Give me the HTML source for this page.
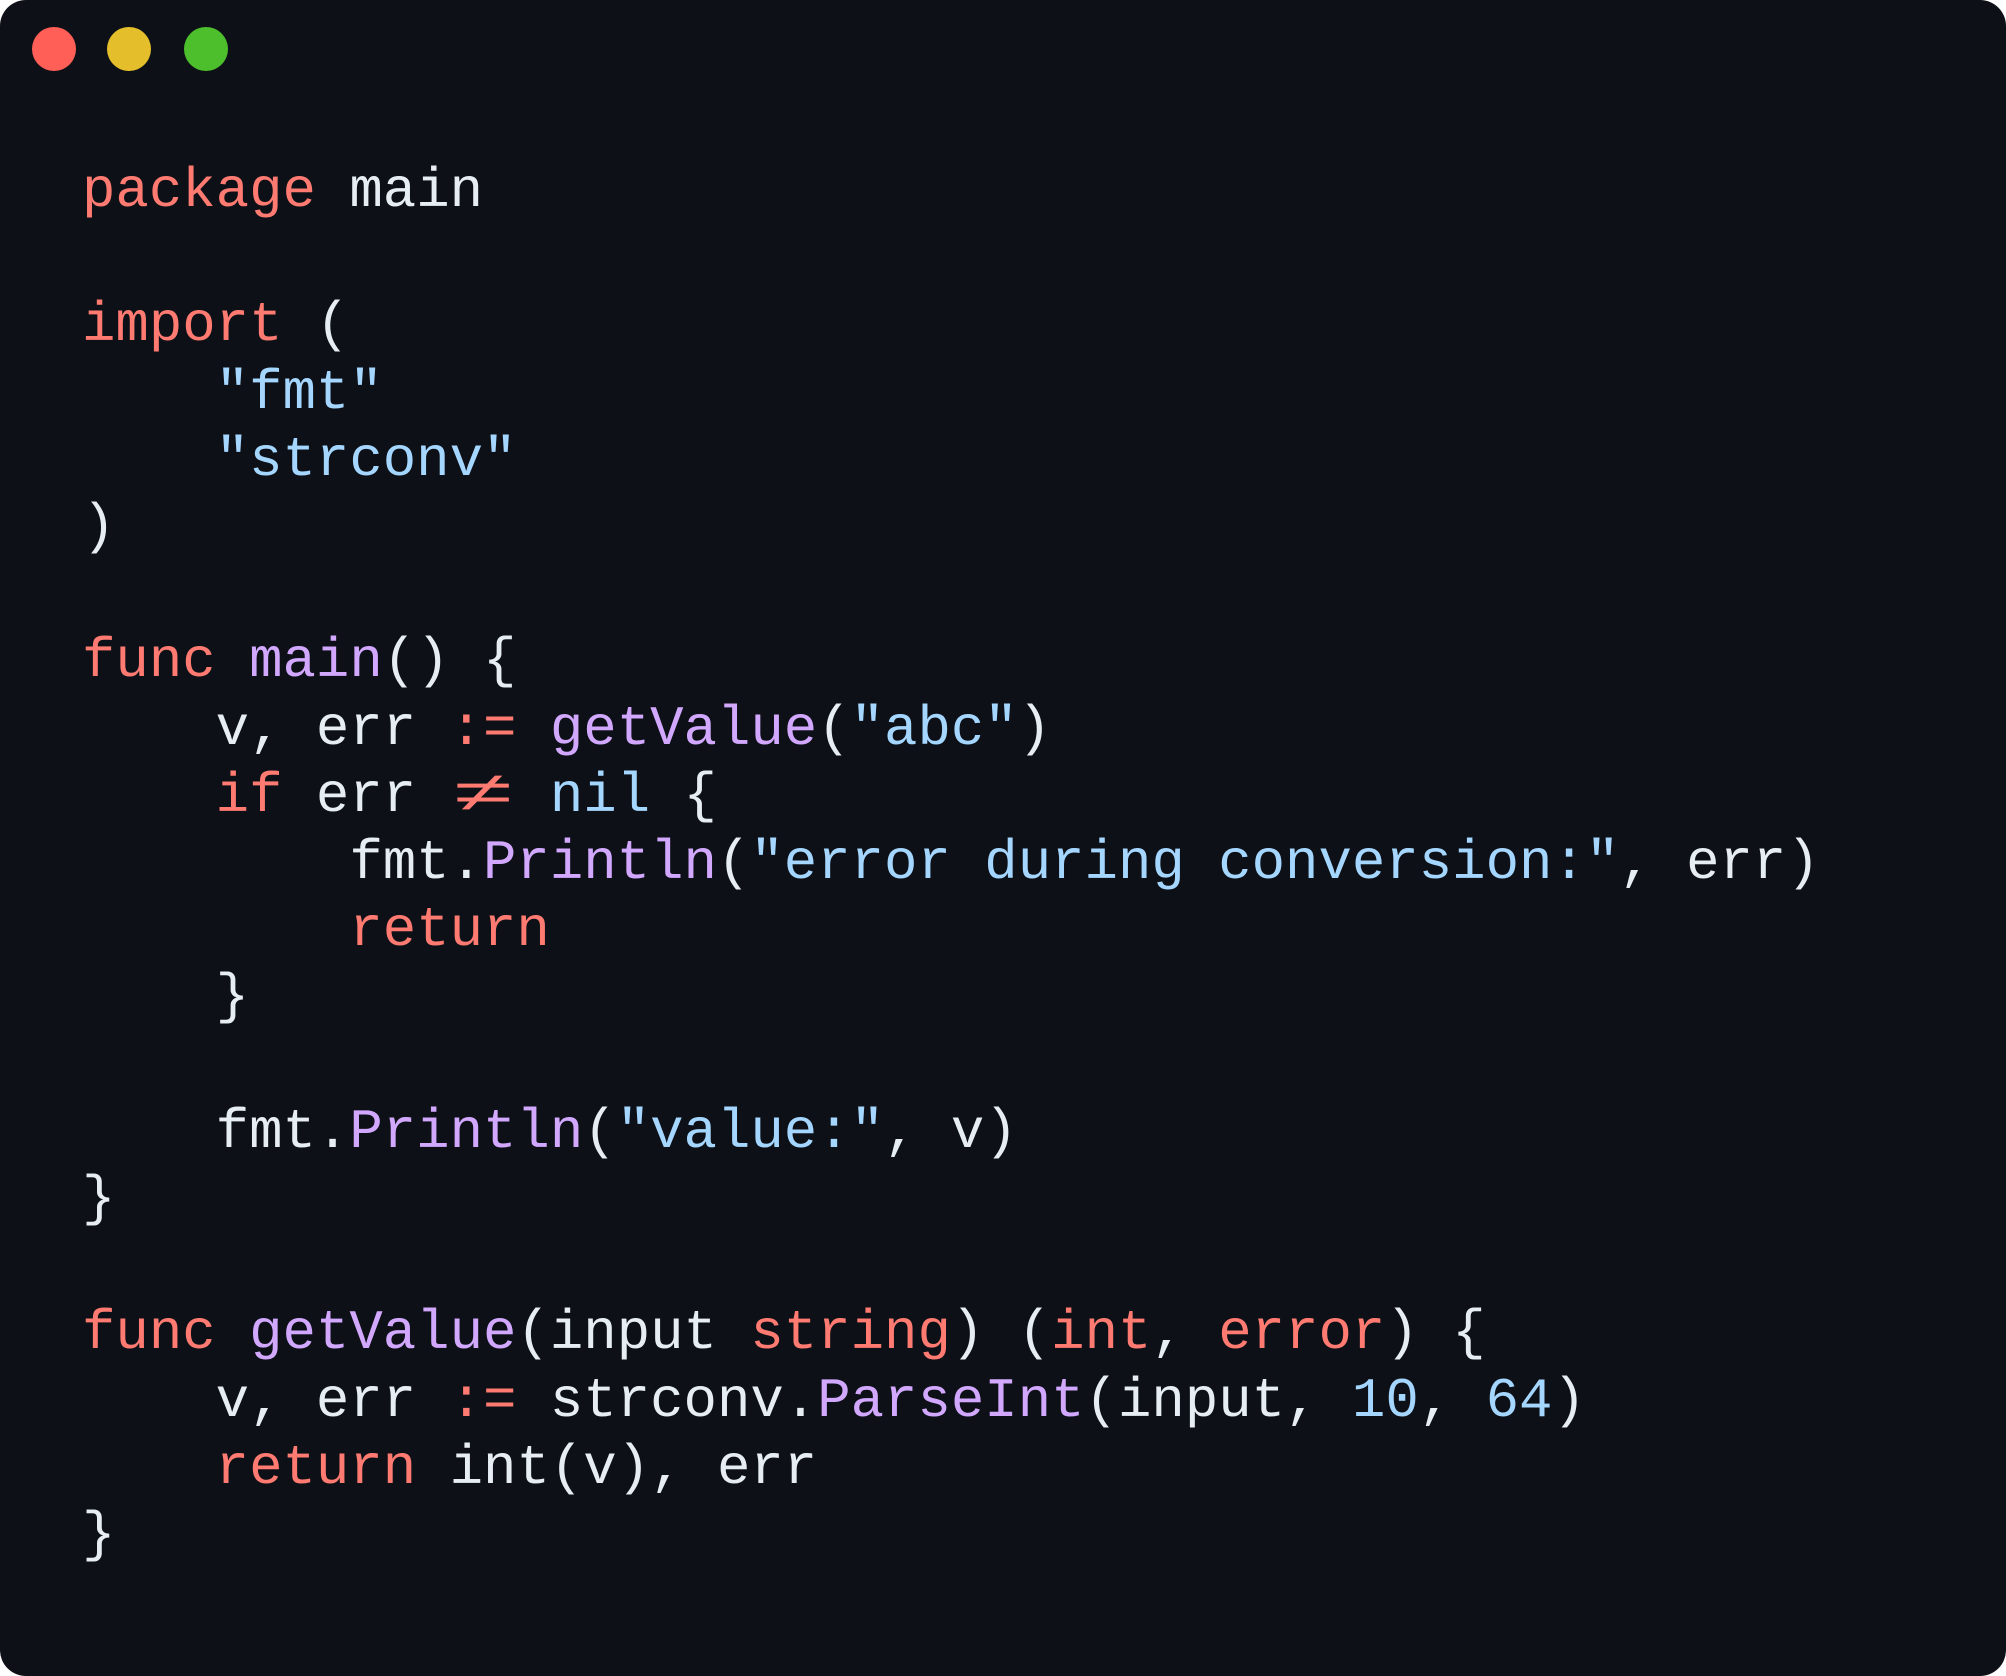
<!DOCTYPE html>
<html><head><meta charset="utf-8"><style>
html,body{margin:0;padding:0;background:#fff;}
.win{position:absolute;left:0;top:0;width:2006px;height:1676px;background:#0d1117;border-radius:26px;overflow:hidden;}
.dot{position:absolute;top:27px;width:44px;height:44px;border-radius:50%;}
pre{position:absolute;left:82px;top:158px;margin:0;font-family:"Liberation Mono",monospace;font-size:55.7px;line-height:67.2px;color:#e6edf3;}
.k{color:#ff7b72}.f{color:#d2a8ff}.s{color:#a5d6ff}
.ne{display:inline-block;width:2ch;text-align:center;color:#ff7b72;transform:scaleX(1.9);}
</style></head><body><div class="win">
<div class="dot" style="left:32px;background:#ff5f57"></div>
<div class="dot" style="left:107px;background:#e5be2b"></div>
<div class="dot" style="left:184px;background:#4dbe2c"></div>
<pre><span class="k">package</span> main

<span class="k">import</span> (
    <span class="s">"fmt"</span>
    <span class="s">"strconv"</span>
)

<span class="k">func</span> <span class="f">main</span>() {
    v, err <span class="k">:=</span> <span class="f">getValue</span>(<span class="s">"abc"</span>)
    <span class="k">if</span> err <span class="ne">≠</span> <span class="s">nil</span> {
        fmt.<span class="f">Println</span>(<span class="s">"error during conversion:"</span>, err)
        <span class="k">return</span>
    }

    fmt.<span class="f">Println</span>(<span class="s">"value:"</span>, v)
}

<span class="k">func</span> <span class="f">getValue</span>(input <span class="k">string</span>) (<span class="k">int</span>, <span class="k">error</span>) {
    v, err <span class="k">:=</span> strconv.<span class="f">ParseInt</span>(input, <span class="s">10</span>, <span class="s">64</span>)
    <span class="k">return</span> int(v), err
}</pre>
</div></body></html>
